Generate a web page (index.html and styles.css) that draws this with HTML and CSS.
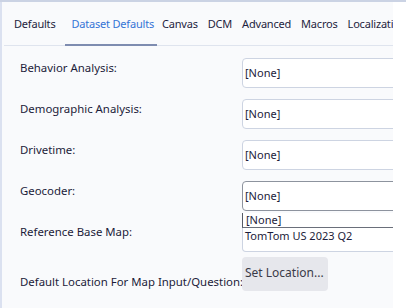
FILE: index.html
```html
<!DOCTYPE html>
<html>
<head>
<meta charset="utf-8">
<link rel="stylesheet" href="styles.css">
</head>
<body>
<div class="frame">
  <div class="panel">
    <div class="tabs">
      <div class="tab t-defaults">Defaults</div>
      <div class="tab active">Dataset Defaults</div>
      <div class="tab">Canvas</div>
      <div class="tab">DCM</div>
      <div class="tab">Advanced</div>
      <div class="tab">Macros</div>
      <div class="tab">Localization</div>
    </div>
    <div class="form">
      <div class="row">
        <div class="label">Behavior Analysis:</div>
        <div class="control"><div class="select">[None]</div></div>
      </div>
      <div class="row">
        <div class="label">Demographic Analysis:</div>
        <div class="control"><div class="select">[None]</div></div>
      </div>
      <div class="row">
        <div class="label">Drivetime:</div>
        <div class="control"><div class="select">[None]</div></div>
      </div>
      <div class="row">
        <div class="label">Geocoder:</div>
        <div class="control"><div class="select focused">[None]</div></div>
      </div>
      <div class="row row-list">
        <div class="label">Reference Base Map:</div>
        <div class="control">
          <div class="listbox">
            <div class="item current">[None]</div>
            <div class="item">TomTom US 2023 Q2</div>
          </div>
        </div>
      </div>
      <div class="row row-button">
        <div class="label">Default Location For Map Input/Question:</div>
        <div class="control"><div class="button">Set Location...</div></div>
      </div>
    </div>
  </div>
  <div class="strip"></div>
</div>
</body>
</html>
```
FILE: styles.css
```css
html, body {
  margin: 0;
  padding: 0;
  background: #ffffff;
}
body {
  width: 406px;
  height: 308px;
  overflow: hidden;
  font-family: "Noto Sans", "Liberation Sans", sans-serif;
  font-size: 11px;
  color: #1c1c3a;
}
.frame {
  display: flex;
  height: 306px;
  border-top: 2px solid #cbd3e4;
}
.panel {
  flex: 1;
  min-width: 0;
  overflow: hidden;
  background: #f9fafc;
  border-left: 2px solid #dbe1f0;
}
.strip {
  width: 13px;
  background: #ffffff;
}
.tabs {
  display: flex;
  height: 43px;
  margin-left: 2px;
  padding-left: 6px;
  border-bottom: 1px solid #dfe4ee;
  white-space: nowrap;
  letter-spacing: -0.2px;
}
.tab {
  padding: 0 5px;
  line-height: 44px;
  height: 43px;
  box-sizing: border-box;
  color: #1e1e3e;
}
.t-defaults {
  padding: 0 4px;
  margin-right: 6px;
}
.tab.active {
  color: #3574d6;
  padding: 0 3px 0 6px;
  line-height: 44px;
  border-bottom: 2px solid #7e8cb0;
  margin-bottom: -1px;
  height: 44px;
}
.form {
  padding-top: 12px;
  padding-left: 18px;
}
.row {
  display: flex;
  align-items: flex-start;
  margin-bottom: 11px;
}
.label {
  width: 222px;
  flex: none;
  padding-top: 2px;
  line-height: 16px;
  white-space: nowrap;
  font-size: 11.4px;
}
.control {
  flex: none;
  width: 200px;
}
.select {
  box-sizing: border-box;
  height: 30px;
  border: 1px solid #cdd4e2;
  border-radius: 4px;
  background: #ffffff;
  padding-left: 2px;
  line-height: 28px;
  color: #1c1c3a;
}
.select.focused {
  border-color: #8d939e;
}
.row-list {
  margin-top: -9px;
  margin-bottom: 5px;
}
.row-list .label {
  padding-top: 11px;
}
.listbox {
  box-sizing: border-box;
  height: 39px;
  border: 1px solid #cdd4e2;
  border-top: none;
  border-radius: 0 0 4px 4px;
  background: #ffffff;
}
.item {
  padding-left: 2px;
  line-height: 16px;
  height: 16px;
}
.item.current {
  height: 14px;
  line-height: 14px;
  margin-left: -1px;
  padding-left: 3px;
  border-left: 1px solid #555a66;
  border-bottom: 1px solid #6a6f7a;
}
.row-button .label {
  padding-top: 17px;
}
.button {
  display: inline-block;
  box-sizing: border-box;
  height: 34px;
  width: 86px;
  padding-left: 3px;
  line-height: 32px;
  background: #e6e7ec;
  border-radius: 4px;
  font-size: 12px;
  color: #3a3a48;
  white-space: nowrap;
}
```
